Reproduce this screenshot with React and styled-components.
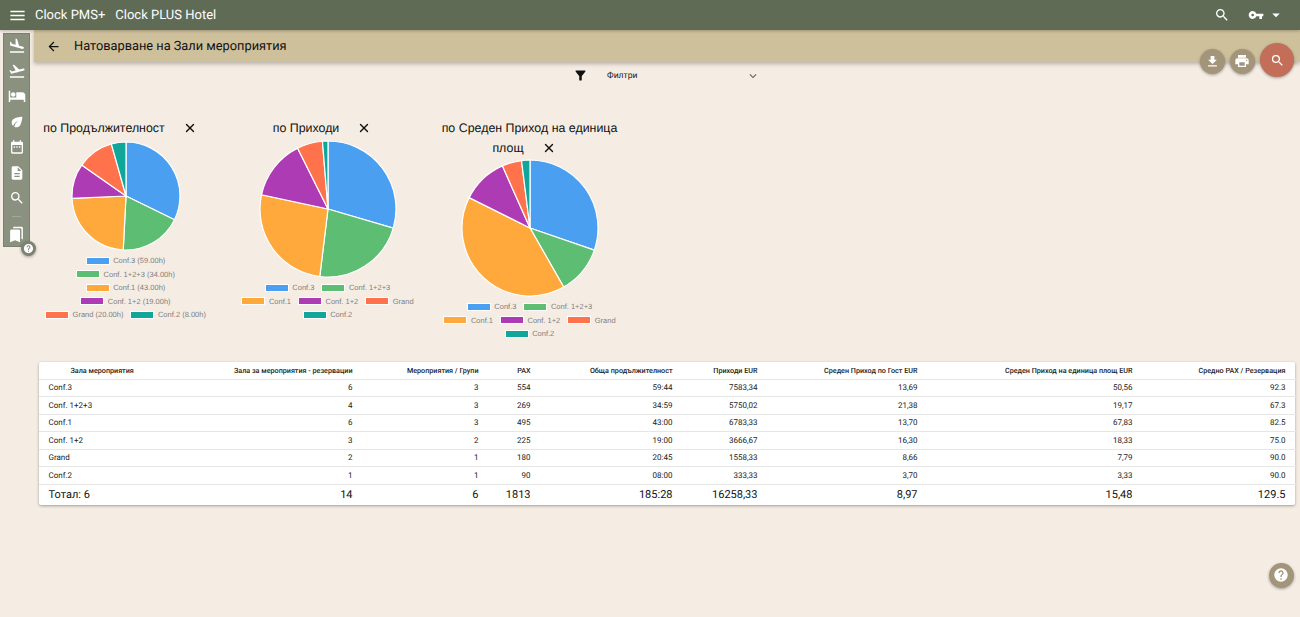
import React from 'react';
import styled, { createGlobalStyle } from 'styled-components';
import { X } from 'lucide-react';
import {
  MdMenu, MdSearch, MdVpnKey, MdArrowDropDown, MdArrowBack, MdFlightLand, MdFlightTakeoff,
  MdHotel, MdEco, MdDateRange, MdDescription, MdBookmarks, MdHelp, MdGetApp, MdPrint,
  MdFilterAlt, MdExpandMore,
} from 'react-icons/md';

const Global = createGlobalStyle`
  html, body { margin: 0; padding: 0; height: 100%; overflow: hidden; background: #f5ede4; }
  body { font-family: Roboto, "Noto Sans", sans-serif; color: #111; text-rendering: geometricPrecision; }
  #root { height: 100%; }
`;

const Page = styled.div`
  position: relative;
  height: 617px;
  display: flex;
  flex-direction: column;
`;
const TopBar = styled.header`
  height: 30px;
  flex: none;
  display: flex;
  align-items: center;
  padding-left: 8px;
  padding-right: 15px;
  background: #5f6b55;
  color: #fff;
  font-size: 13px;
  box-shadow: 0 1px 3px rgba(0,0,0,.25);
  z-index: 3;
`;
const Brand = styled.span`
  margin-left: ${p => p.$gap}px;
`;
const TopActions = styled.div`
  margin-left: auto;
  display: flex;
  align-items: center;
  color: #fff;
`;
const Main = styled.main`
  margin-left: 34px;
  display: flex;
  flex-direction: column;
`;
const TitleBar = styled.div`
  height: 32px;
  display: flex;
  align-items: center;
  padding-left: 12px;
  gap: 13px;
  background: #cfc09c;
  font-size: 12.8px;
  color: #111;
  box-shadow: 0 2px 4px rgba(0,0,0,.25);
`;
const FilterRow = styled.div`
  align-self: center;
  width: 200px;
  height: 27px;
  display: flex;
  align-items: center;
  box-sizing: border-box;
  padding-left: 6px;
  padding-right: 7px;
  font-size: 8.6px;
  color: #222;
`;
const FilterLabel = styled.span`
  margin-left: 19px;
  flex: 1;
`;
const Charts = styled.section`
  margin-top: 29px;
  padding-left: 2.5px;
  display: flex;
  gap: 24px;
  align-items: flex-start;
`;
const ChartCard = styled.div`
  width: 178px;
  display: flex;
  flex-direction: column;
  align-items: center;
`;
const ChartTitle = styled.div`
  font-family: "Liberation Sans", Arial, sans-serif;
  font-size: 12.4px;
  line-height: 20px;
  text-align: center;
  color: #111;
  svg { vertical-align: -3px; margin-left: 18px; margin-right: 11px; }
`;
const PieSvg = styled.svg`
  display: block;
  margin-top: ${p => p.$top}px;
`;
const Legend = styled.div`
  margin-top: 3px;
  display: flex;
  flex-wrap: wrap;
  justify-content: center;
  column-gap: 7px;
  width: 173px;
`;
const LegendItem = styled.div`
  height: 13.5px;
  display: flex;
  align-items: center;
  gap: 3.5px;
  font-family: "Liberation Sans", Arial, sans-serif;
  font-size: 7.5px;
  color: #808080;
  white-space: nowrap;
`;
const Swatch = styled.span`
  width: 24px;
  height: 8px;
  box-sizing: border-box;
  border: 1px solid #fff;
  background: ${p => p.$color};
`;
const Card = styled.div`
  margin: 21px 5px 0 4.5px;
  background: #fff;
  border-radius: 2px;
  box-shadow: 0 1px 3px rgba(0,0,0,.35);
`;
const Table = styled.table`
  width: 100%;
  table-layout: fixed;
  border-collapse: collapse;
  font-size: 8px;
  color: #222;
`;
const Th = styled.th`
  height: 17px;
  padding: 0 10px 0 ${p => (p.$first ? 32 : 0)}px;
  text-align: ${p => (p.$first ? 'left' : 'right')};
  font-size: 7.2px;
  font-weight: 500;
  color: #222;
  white-space: nowrap;
  border-bottom: 1px solid #e6e6e6;
`;
const Td = styled.td`
  height: 16.5px;
  padding: 0 10px 0 ${p => (p.$first ? 10 : 0)}px;
  text-align: ${p => (p.$first ? 'left' : 'right')};
  border-bottom: 1px solid #e6e6e6;
`;
const TotalCell = styled.td`
  height: 20.5px;
  padding: 0 10px 0 ${p => (p.$first ? 10 : 0)}px;
  text-align: ${p => (p.$first ? 'left' : 'right')};
  font-size: 11px;
  color: #111;
`;
const Sidebar = styled.nav`
  position: absolute;
  left: 3px;
  top: 33px;
  width: 27px;
  height: 214px;
  display: flex;
  flex-direction: column;
  align-items: center;
  background: #8b917f;
  box-shadow: inset 0 0 0 1px #7b816e;
  color: #fff;
  z-index: 2;
`;
const SideIcon = styled.span`
  height: 25.4px;
  flex: none;
  display: flex;
  align-items: center;
  justify-content: center;
`;
const SideRule = styled.span`
  width: 9px;
  height: 1px;
  margin: 5px 0 5px;
  background: #a2a797;
`;
const Fab = styled.button`
  position: absolute;
  left: ${p => p.$x - p.$size / 2}px;
  top: ${p => p.$y - p.$size / 2}px;
  width: ${p => p.$size}px;
  height: ${p => p.$size}px;
  padding: 0;
  border: 0;
  border-radius: 50%;
  display: flex;
  align-items: center;
  justify-content: center;
  color: #fff;
  background: ${p => p.$bg};
  box-shadow: 0 1px 3px rgba(0,0,0,.35);
  z-index: 4;
`;

const COLORS = ['#4a9ff0', '#5dbd72', '#ffa93c', '#ad3cb4', '#ff724c', '#10a79a'];
const NAMES = ['Conf.3', 'Conf. 1+2+3', 'Conf.1', 'Conf. 1+2', 'Grand', 'Conf.2'];

function Pie({ values, r, top }) {
  const total = values.reduce((a, b) => a + b, 0);
  const c = r + 1;
  let acc = 0;
  const slices = values.map((v, i) => {
    const a0 = (acc / total) * 2 * Math.PI;
    acc += v;
    const a1 = (acc / total) * 2 * Math.PI;
    const x0 = c + r * Math.sin(a0), y0 = c - r * Math.cos(a0);
    const x1 = c + r * Math.sin(a1), y1 = c - r * Math.cos(a1);
    const large = a1 - a0 > Math.PI ? 1 : 0;
    return (
      <path key={i} fill={COLORS[i]} stroke="#fff" strokeWidth="1.2"
        d={`M${c} ${c}L${x0} ${y0}A${r} ${r} 0 ${large} 1 ${x1} ${y1}Z`} />
    );
  });
  return <PieSvg $top={top} width={c * 2} height={c * 2} viewBox={`0 0 ${c * 2} ${c * 2}`}>{slices}</PieSvg>;
}

function Chart({ title, values, labels, r, top }) {
  return (
    <ChartCard>
      <ChartTitle>{title}<X size={14} strokeWidth={2.3} color="#111" /></ChartTitle>
      <Pie values={values} r={r} top={top} />
      <Legend>
        {labels.map((l, i) => (
          <LegendItem key={l}><Swatch $color={COLORS[i]} />{l}</LegendItem>
        ))}
      </Legend>
    </ChartCard>
  );
}

const HEAD = ['Зала мероприятия', 'Зала за мероприятия - резервации', 'Мероприятия / Групи', 'PAX', 'Обща продължителност', 'Приходи EUR', 'Среден Приход по Гост EUR', 'Среден Приход на единица площ EUR', 'Средно PAX / Резервация'];
const ROWS = [
  ['Conf.3', '6', '3', '554', '59:44', '7583,34', '13,69', '50,56', '92.3'],
  ['Conf. 1+2+3', '4', '3', '269', '34:59', '5750,02', '21,38', '19,17', '67.3'],
  ['Conf.1', '6', '3', '495', '43:00', '6783,33', '13,70', '67,83', '82.5'],
  ['Conf. 1+2', '3', '2', '225', '19:00', '3666,67', '16,30', '18,33', '75.0'],
  ['Grand', '2', '1', '180', '20:45', '1558,33', '8,66', '7,79', '90.0'],
  ['Conf.2', '1', '1', '90', '08:00', '333,33', '3,70', '3,33', '90.0'],
];
const TOTAL = ['Тотал: 6', '14', '6', '1813', '185:28', '16258,33', '8,97', '15,48', '129.5'];
const WIDTHS = [162, 162, 126, 52, 142, 85, 160, 215, 153];

const HOURS = [59, 34, 43, 19, 20, 8];

export default function App() {
  return (
    <Page>
      <Global />
      <TopBar>
        <MdMenu size={19} />
        <Brand $gap={8}>Clock PMS+</Brand>
        <Brand $gap={10}>Clock PLUS Hotel</Brand>
        <TopActions>
          <MdSearch size={16} />
          <MdVpnKey size={16} style={{ marginLeft: 18 }} />
          <MdArrowDropDown size={18} style={{ marginLeft: 3 }} />
        </TopActions>
      </TopBar>
      <Sidebar>
        <SideIcon><MdFlightLand size={18} /></SideIcon>
        <SideIcon><MdFlightTakeoff size={18} /></SideIcon>
        <SideIcon><MdHotel size={18} /></SideIcon>
        <SideIcon><MdEco size={16} /></SideIcon>
        <SideIcon><MdDateRange size={16} /></SideIcon>
        <SideIcon><MdDescription size={16} /></SideIcon>
        <SideIcon><MdSearch size={16} /></SideIcon>
        <SideRule />
        <SideIcon><MdBookmarks size={17} /></SideIcon>
      </Sidebar>
      <Fab $x={28} $y={248} $size={15} $bg="#7d8372"><MdHelp size={11} /></Fab>
      <Fab $x={1212} $y={61} $size={25} $bg="#a3957a"><MdGetApp size={15} /></Fab>
      <Fab $x={1242} $y={61} $size={25} $bg="#a3957a"><MdPrint size={16} /></Fab>
      <Fab $x={1277} $y={60} $size={34} $bg="#c26e58"><MdSearch size={15} /></Fab>
      <Fab $x={1281} $y={575} $size={25} $bg="#a3957a"><MdHelp size={16} /></Fab>
      <Main>
        <TitleBar><MdArrowBack size={15} />Натоварване на Зали мероприятия</TitleBar>
        <FilterRow>
          <MdFilterAlt size={15} color="#111" />
          <FilterLabel>Филтри</FilterLabel>
          <MdExpandMore size={14} color="#666" />
        </FilterRow>
        <Charts>
          <Chart title="по Продължителност" r={54} top={3}
            values={HOURS}
            labels={NAMES.map((n, i) => `${n} (${HOURS[i].toFixed(2)}h)`)} />
          <Chart title="по Приходи" r={68} top={2}
            values={[7583.34, 5750.02, 6783.33, 3666.67, 1558.33, 333.33]} labels={NAMES} />
          <Chart title="по Среден Приход на единица площ" r={68} top={1}
            values={[50.56, 19.17, 67.83, 18.33, 7.79, 3.33]} labels={NAMES} />
        </Charts>
        <Card>
          <Table>
            <colgroup>
              {WIDTHS.map((w, i) => <col key={i} style={{ width: w }} />)}
            </colgroup>
            <thead>
              <tr>{HEAD.map((h, i) => <Th key={h} $first={i === 0}>{h}</Th>)}</tr>
            </thead>
            <tbody>
              {ROWS.map(r => (
                <tr key={r[0]}>{r.map((c, i) => <Td key={i} $first={i === 0}>{c}</Td>)}</tr>
              ))}
              <tr>{TOTAL.map((c, i) => <TotalCell key={i} $first={i === 0}>{c}</TotalCell>)}</tr>
            </tbody>
          </Table>
        </Card>
      </Main>
    </Page>
  );
}
